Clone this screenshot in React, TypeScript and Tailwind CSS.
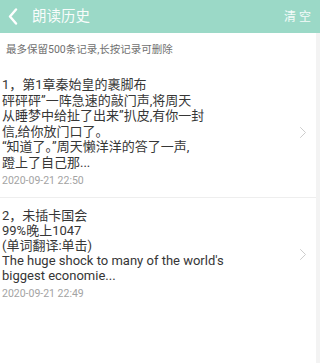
import React from 'react';

const font = { fontFamily: 'Roboto, "Noto Sans CJK SC", sans-serif' };

interface HistoryItem {
  id: number;
  lines: string[];
  time: string;
}

const items: HistoryItem[] = [
  {
    id: 1,
    lines: [
      '1，第1章秦始皇的裹脚布',
      '砰砰砰”一阵急速的敲门声,将周天',
      '从睡梦中给扯了出来”扒皮,有你一封',
      '信,给你放门口了。',
      '“知道了。”周天懒洋洋的答了一声,',
      '蹬上了自己那...',
    ],
    time: '2020-09-21 22:50',
  },
  {
    id: 2,
    lines: [
      '2，未插卡国会',
      '99%晚上1047',
      '(单词翻译:单击)',
      "The huge shock to many of the world's",
      'biggest economie...',
    ],
    time: '2020-09-21 22:49',
  },
];

const ChevronRight = () => (
  <svg width="8" height="13" viewBox="0 0 8 13" fill="none">
    <path d="M1.5 1.5 L6.5 6.5 L1.5 11.5" stroke="#cdcdcd" strokeWidth="1" strokeLinecap="round" strokeLinejoin="round" />
  </svg>
);

export default function App() {
  return (
    <div className="w-[320px] h-[363px] bg-white flex flex-col overflow-hidden" style={font}>
      {/* header */}
      <div className="h-[33px] bg-[#9bd9c7] flex items-center pl-[8px] pr-[9px] shrink-0">
        <svg width="10" height="17" viewBox="0 0 10 17" fill="none">
          <path d="M8 1.5 L2 8.5 L8 15.5" stroke="white" strokeWidth="2.4" strokeLinecap="round" strokeLinejoin="round" />
        </svg>
        <span className="ml-[14px] text-[14.5px] text-white/95">朗读历史</span>
        <span className="ml-auto text-[12px] text-white/90">清 空</span>
      </div>

      <div className="flex flex-1">
        <div className="flex-1 flex flex-col">
          <div className="h-[34px] flex items-center pl-[6px] text-[10.5px] text-[#6f6f6f]">
            最多保留500条记录,长按记录可删除
          </div>

          {items.map((item, i) => (
            <div
              key={item.id}
              className={`flex items-center pl-[2px] pr-[9px] pt-[10px] pb-[9px] ${i === 0 ? 'border-b border-[#eeeeee]' : ''}`}
            >
              <div className="flex-1">
                <div className={`text-[13px] text-[#363636] ${i === 0 ? 'leading-[15.5px]' : 'leading-[15px]'}`}>
                  {item.lines.map((line, j) => (
                    <div key={j} className="whitespace-nowrap">{line}</div>
                  ))}
                </div>
                <div className="mt-[4px] text-[10.5px] leading-[14px] text-[#a3a3a3]">{item.time}</div>
              </div>
              <ChevronRight />
            </div>
          ))}
        </div>
        <div className="w-[4px] bg-[#f3f3f3]" />
      </div>
    </div>
  );
}
